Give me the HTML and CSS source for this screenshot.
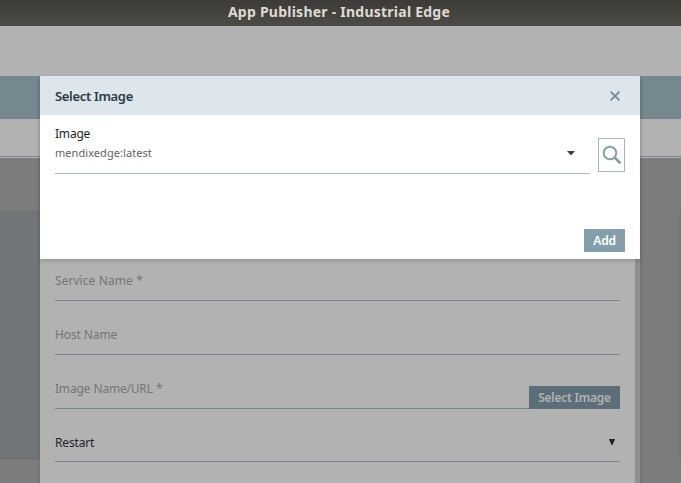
FILE: index.html
```html
<!DOCTYPE html>
<html lang="en">
<head>
<meta charset="utf-8">
<title>App Publisher - Industrial Edge</title>
<link rel="stylesheet" href="styles.css">
</head>
<body>
<div class="window">
  <header class="titlebar"><span>App Publisher - Industrial Edge</span></header>
  <div class="topbar"></div>
  <div class="navbar"></div>
  <div class="tabs"></div>
  <main class="workspace">
    <div class="card"></div>
    <div class="card card-right"></div>
  </main>

  <section class="form-panel">
    <form class="form">
      <div class="field"><span class="label service">Service Name *</span></div>
      <div class="field"><span class="label host">Host Name</span></div>
      <div class="field"><span class="label url">Image Name/URL *</span><button type="button" class="btn btn-dim"><span>Select Image</span></button></div>
      <div class="field field-select"><span class="label restart">Restart</span>
        <svg class="arrow" width="6" height="6" viewBox="0 0 6 6"><path d="M0 0H6L3.5 6H2.5Z" fill="#192629"/></svg>
      </div>
    </form>
    <div class="scrollbar"></div>
  </section>

  <section class="dialog">
    <header class="dialog-head">
      <h1>Select Image</h1>
      <svg width="10" height="10" viewBox="0 0 10 10"><path d="M.6.6L9.4 9.4M9.4.6L.6 9.4" stroke="#718a96" stroke-width="1.8" fill="none"/></svg>
    </header>
    <div class="picker">
      <div class="select">
        <label>Image</label>
        <div class="value"><span>mendixedge:latest</span>
          <svg width="8" height="4" viewBox="0 0 8 4"><path d="M0 0H8L4.5 4H3.5Z" fill="#393f42"/></svg>
        </div>
      </div>
      <div class="search">
        <svg width="20" height="20" viewBox="0 0 20 20"><circle cx="8" cy="8" r="6.3" fill="none" stroke="#849eab" stroke-width="2"/><path d="M12.5 12.5L18.5 18.3" stroke="#849eab" stroke-width="2.6"/></svg>
      </div>
    </div>
    <footer><button type="button" class="btn btn-add">Add</button></footer>
  </section>
</div>
</body>
</html>
```
FILE: styles.css
```css
* { box-sizing: border-box; }
body { margin: 0; font-family: "Noto Sans", sans-serif; }
.window { position: relative; width: 681px; height: 483px; overflow: hidden; display: flex; flex-direction: column; background: #b2b2b2; }
.titlebar { height: 26px; flex: none; background: linear-gradient(#3c3b37, #4d4b45); color: #dfdbd2; display: flex; justify-content: center; padding-right: 3px; font: bold 14px/24px "Noto Sans", sans-serif; letter-spacing: .24px; white-space: nowrap; }
.topbar { height: 50px; flex: none; }
.navbar { height: 43px; flex: none; background: #75878f; }
.tabs { height: 39px; flex: none; border-bottom: 1px solid #b2b2b2; box-shadow: inset 0 -1px #75878f; }
.workspace { flex: 1; display: flex; justify-content: space-between; background: #7c7c7c; padding-top: 53px; }
.card { width: 40px; height: 246px; background: #717679; box-shadow: 0 1px 3px rgba(0, 0, 0, .2); }
.card-right { width: 1px; }

.form-panel { position: absolute; left: 40px; top: 76px; width: 600px; height: 407px; display: flex; background: #b2b2b2; box-shadow: 0 2px 4px rgba(0, 0, 0, .16); }
.form { flex: 1; padding: 171px 15px 0; }
.scrollbar { width: 5px; background: #8f8f8f; }
.field { height: 54px; border-bottom: 1px solid #75878f; display: flex; align-items: flex-end; justify-content: space-between; }
.field-select { height: 53px; }
.label { font-size: 12px; line-height: 17px; margin-bottom: 11px; color: #737677; white-space: nowrap; }
.service { letter-spacing: .04px; word-spacing: .3px; }
.host { letter-spacing: -.1px; }
.url { letter-spacing: -.2px; word-spacing: .4px; }
.restart { color: #192629; margin-bottom: 10px; letter-spacing: -.15px; }
.arrow { margin: 0 5px 16px 0; }
.btn { border: 0; padding: 0; height: 23px; background: #849eab; color: #fff; font: 600 12px/22px "Noto Sans", sans-serif; letter-spacing: -.25px; text-align: center; white-space: nowrap; }
.btn-dim { width: 91px; margin-bottom: -1px; background: #5c6e77; color: #b2b2b2; }
.btn-add { width: 41px; }

.dialog { position: absolute; left: 40px; top: 76px; width: 600px; height: 183px; display: flex; flex-direction: column; background: #fff; box-shadow: 0 2px 4px rgba(0, 0, 0, .16); }
.dialog-head { height: 39px; flex: none; display: flex; align-items: center; justify-content: space-between; padding: 0 20px 0 15px; background: #dde5ed; }
.dialog-head h1 { margin: 0; font-size: 13px; line-height: 18px; font-weight: 600; letter-spacing: -.33px; color: #2b3c43; }
.picker { display: flex; gap: 8px; padding: 0 15px; height: 59px; }
.select { width: 535px; border-bottom: 1px solid #a2bac6; padding-top: 10px; }
.select label { display: block; font-size: 12px; line-height: 17px; letter-spacing: -.2px; color: #1e1e1e; }
.value { display: flex; justify-content: space-between; align-items: center; padding-right: 15px; font-size: 11px; line-height: 22px; letter-spacing: .06px; color: #626262; }
.search { width: 27px; height: 34px; margin-top: 23px; border: 1px solid #a2bac6; display: flex; align-items: center; justify-content: center; }
.search svg { flex: none; }
.dialog footer { margin-top: auto; padding: 0 15px 7px; display: flex; justify-content: flex-end; }
```
